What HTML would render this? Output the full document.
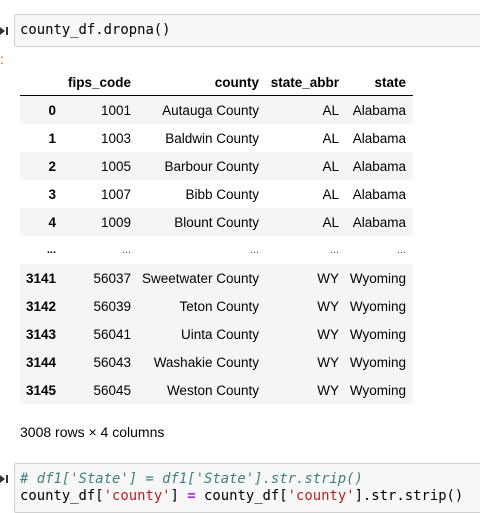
<!DOCTYPE html>
<html><head><meta charset="utf-8"><style>
body{margin:0;width:480px;height:510px;background:#fff;position:relative;overflow:hidden;font-family:"Liberation Sans",Arial,sans-serif;color:#000}
.code{position:absolute;left:14px;right:-2px;background:#f7f7f7;border:1px solid #cfcfcf;border-radius:2px;font-family:"DejaVu Sans Mono",monospace;font-size:13.9px;line-height:17px;padding:7px 5px;box-sizing:border-box;white-space:pre}
.arrow{position:absolute;left:0;width:8px;height:10px}
table{position:absolute;left:20px;top:69px;border-collapse:collapse;font-size:13.5px;width:393px}
th,td{text-align:right;height:28px;padding:0 7px 0 0;white-space:nowrap}
thead th{border-bottom:1px solid #000;height:26px}
tbody th{font-weight:bold}
.g{background:#f5f5f5}
.dots td{font-size:11px;color:#555}
.dots th{font-size:11px}
</style></head><body>
<svg class="arrow" style="top:26px" viewBox="0 0 8 10"><path d="M0 1 L5 5 L0 9Z" fill="#333"/><rect x="6" y="1" width="2" height="8" fill="#333"/></svg>
<div class="code" style="top:14px;height:33px">county_df.dropna()</div>
<div style="position:absolute;left:0;top:51px;color:#d84315;font-size:14px">:</div>
<table>
<colgroup><col style="width:43px"><col style="width:75px"><col style="width:128px"><col style="width:80px"><col></colgroup>
<thead><tr><th></th><th>fips_code</th><th>county</th><th>state_abbr</th><th>state</th></tr></thead>
<tbody>
<tr class="g"><th>0</th><td>1001</td><td>Autauga County</td><td>AL</td><td>Alabama</td></tr>
<tr><th>1</th><td>1003</td><td>Baldwin County</td><td>AL</td><td>Alabama</td></tr>
<tr class="g"><th>2</th><td>1005</td><td>Barbour County</td><td>AL</td><td>Alabama</td></tr>
<tr><th>3</th><td>1007</td><td>Bibb County</td><td>AL</td><td>Alabama</td></tr>
<tr class="g"><th>4</th><td>1009</td><td>Blount County</td><td>AL</td><td>Alabama</td></tr>
<tr class="dots"><th>...</th><td>...</td><td>...</td><td>...</td><td>...</td></tr>
<tr class="g"><th>3141</th><td>56037</td><td>Sweetwater County</td><td>WY</td><td>Wyoming</td></tr>
<tr class="g"><th>3142</th><td>56039</td><td>Teton County</td><td>WY</td><td>Wyoming</td></tr>
<tr class="g"><th>3143</th><td>56041</td><td>Uinta County</td><td>WY</td><td>Wyoming</td></tr>
<tr class="g"><th>3144</th><td>56043</td><td>Washakie County</td><td>WY</td><td>Wyoming</td></tr>
<tr class="g"><th>3145</th><td>56045</td><td>Weston County</td><td>WY</td><td>Wyoming</td></tr>
</tbody></table>
<div style="position:absolute;left:20px;top:424px;font-size:14px">3008 rows × 4 columns</div>
<svg class="arrow" style="top:474px" viewBox="0 0 8 10"><path d="M0 1 L5 5 L0 9Z" fill="#333"/><rect x="6" y="1" width="2" height="8" fill="#333"/></svg>
<div class="code" style="top:463px;height:50px;padding-top:7px"><span style="color:#408080;font-style:italic"># df1['State'] = df1['State'].str.strip()</span>
county_df[<span style="color:#ba2121">'county'</span>] <span style="color:#aa22ff;font-weight:bold">=</span> county_df[<span style="color:#ba2121">'county'</span>].str.strip()</div>
</body></html>
